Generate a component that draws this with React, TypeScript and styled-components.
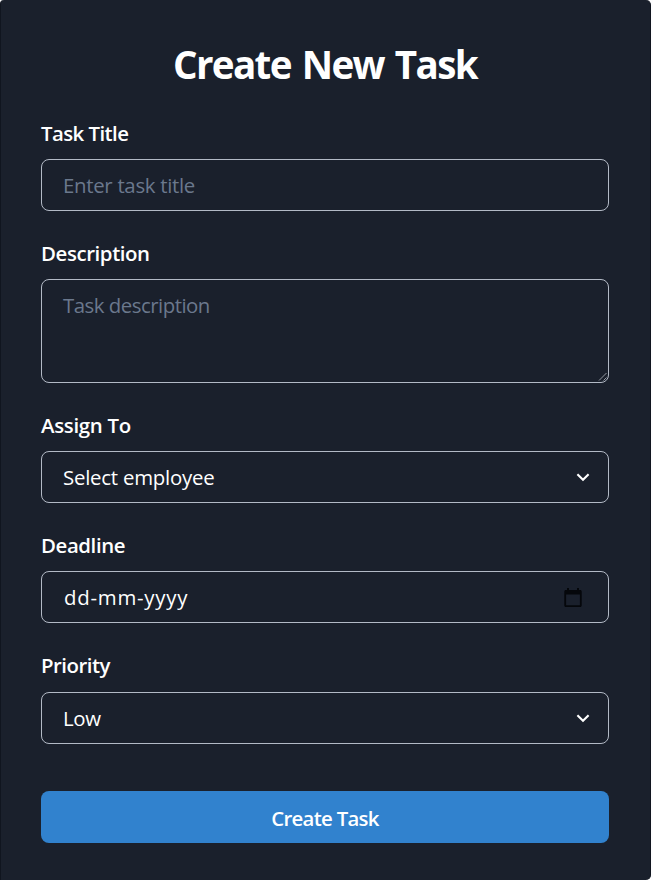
import React from "react";
import styled, { createGlobalStyle } from "styled-components";

const GlobalStyle = createGlobalStyle`
  * { box-sizing: border-box; }
  body {
    margin: 0;
    background: #fdfdfe;
    font-family: "Open Sans", "Noto Sans", sans-serif;
    color: #fff;
    overflow: hidden;
  }
`;

const Card = styled.form`
  width: 651px;
  height: 880px;
  padding: 38px 41px 0 40px;
  background: #1a202c;
  border: solid #10151f;
  border-width: 0 1px 0 1px;
  border-radius: 4px 5px 5px 0;
`;

const Heading = styled.h1`
  margin: 0 0 28px;
  height: 52px;
  font-size: 38.6px;
  line-height: 52px;
  font-weight: 700;
  text-align: center;
  letter-spacing: -1.65px;
  word-spacing: 2.5px;
`;

const Field = styled.div<{ $gap?: number }>`
  display: flex;
  flex-direction: column;
  margin-bottom: ${(p) => p.$gap ?? 27}px;
`;

const Label = styled.label<{ $spacing?: number; $gap?: number }>`
  height: 31px;
  margin-bottom: ${(p) => p.$gap ?? 10}px;
  font-size: 20.4px;
  line-height: 31px;
  font-weight: 600;
  letter-spacing: ${(p) => p.$spacing ?? -0.4}px;
`;

const Frame = styled.div<{ $tall?: boolean }>`
  position: relative;
  display: flex;
  align-items: center;
  height: ${(p) => (p.$tall ? 104 : 52)}px;
  border: 1px solid #b3bac6;
  border-radius: 8px;
`;

const controlText = `
  width: 100%;
  height: 100%;
  margin: 0;
  border: 0;
  outline: 0;
  background: transparent;
  color: #fff;
  font-family: inherit;
  font-size: 20.4px;
  font-weight: 400;
`;

const TextInput = styled.input<{ $spacing: number; $bright?: boolean }>`
  ${controlText}
  padding: 0 21px 0 ${(p) => (p.$bright ? 22 : 21)}px;
  letter-spacing: ${(p) => p.$spacing}px;
  &::placeholder {
    color: ${(p) => (p.$bright ? "#fff" : "#6b788d")};
    opacity: 1;
  }
`;

const TextArea = styled.textarea`
  ${controlText}
  padding: 10px 21px;
  line-height: 30px;
  letter-spacing: -0.5px;
  resize: none;
  &::placeholder {
    color: #6b788d;
    opacity: 1;
  }
`;

const Select = styled.select<{ $spacing: number }>`
  ${controlText}
  padding: 0 42px 0 21px;
  letter-spacing: ${(p) => p.$spacing}px;
  appearance: none;
`;

const Adornment = styled.svg<{ $right: number; $top: number }>`
  position: absolute;
  right: ${(p) => p.$right}px;
  top: ${(p) => p.$top}px;
  pointer-events: none;
`;

const Submit = styled.button`
  display: block;
  width: 100%;
  height: 52px;
  padding: 2px 0 0;
  border: 0;
  border-radius: 8px;
  background: #3182ce;
  color: #fff;
  font-family: inherit;
  font-size: 20.4px;
  font-weight: 600;
  letter-spacing: -0.7px;
`;

const Chevron = () => (
  <Adornment $right={18} $top={19} width="14" height="12" viewBox="0 0 14 12" fill="none">
    <path d="M1.4 3.2 7 8.8l5.6-5.6" stroke="#fff" strokeWidth="2.1" />
  </Adornment>
);

const Calendar = () => (
  <Adornment $right={26} $top={16} width="18" height="20" viewBox="0 0 18 20">
    <path
      fillRule="evenodd"
      fill="#05070b"
      d="M3 0h2v2h8V0h2v2h1.2c.9 0 1.5.6 1.5 1.5v14c0 .9-.6 1.5-1.5 1.5H1.8C.9 19 .3 18.4.3 17.5v-14C.3 2.6.9 2 1.8 2H3zM2.1 6.5v10.7h13.8V6.5z"
    />
  </Adornment>
);

const Grip = () => (
  <Adornment $right={0} $top={92} width="10" height="10" viewBox="0 0 10 10" fill="none">
    <path d="M1 8.5 8.5 1M5.500 8.5 8.5 5.500" stroke="#9499a1" strokeWidth="1" />
  </Adornment>
);

export default function App() {
  return (
    <>
      <GlobalStyle />
      <Card onSubmit={(e) => e.preventDefault()}>
        <Heading>Create New Task</Heading>
        <Field>
          <Label htmlFor="title" $spacing={-0.55}>Task Title</Label>
          <Frame>
            <TextInput id="title" placeholder="Enter task title" $spacing={-0.3} />
          </Frame>
        </Field>
        <Field>
          <Label htmlFor="description">Description</Label>
          <Frame $tall>
            <TextArea id="description" placeholder="Task description" />
            <Grip />
          </Frame>
        </Field>
        <Field>
          <Label htmlFor="assignee" $spacing={-0.3}>Assign To</Label>
          <Frame>
            <Select id="assignee" $spacing={-0.23}>
              <option>Select employee</option>
            </Select>
            <Chevron />
          </Frame>
        </Field>
        <Field>
          <Label htmlFor="deadline">Deadline</Label>
          <Frame>
            <TextInput id="deadline" placeholder="dd-mm-yyyy" $spacing={0.75} $bright />
            <Calendar />
          </Frame>
        </Field>
        <Field $gap={47}>
          <Label htmlFor="priority" $spacing={-0.5} $gap={11}>Priority</Label>
          <Frame>
            <Select id="priority" $spacing={-0.3}>
              <option>Low</option>
              <option>Medium</option>
              <option>High</option>
            </Select>
            <Chevron />
          </Frame>
        </Field>
        <Submit type="submit">Create Task</Submit>
      </Card>
    </>
  );
}
